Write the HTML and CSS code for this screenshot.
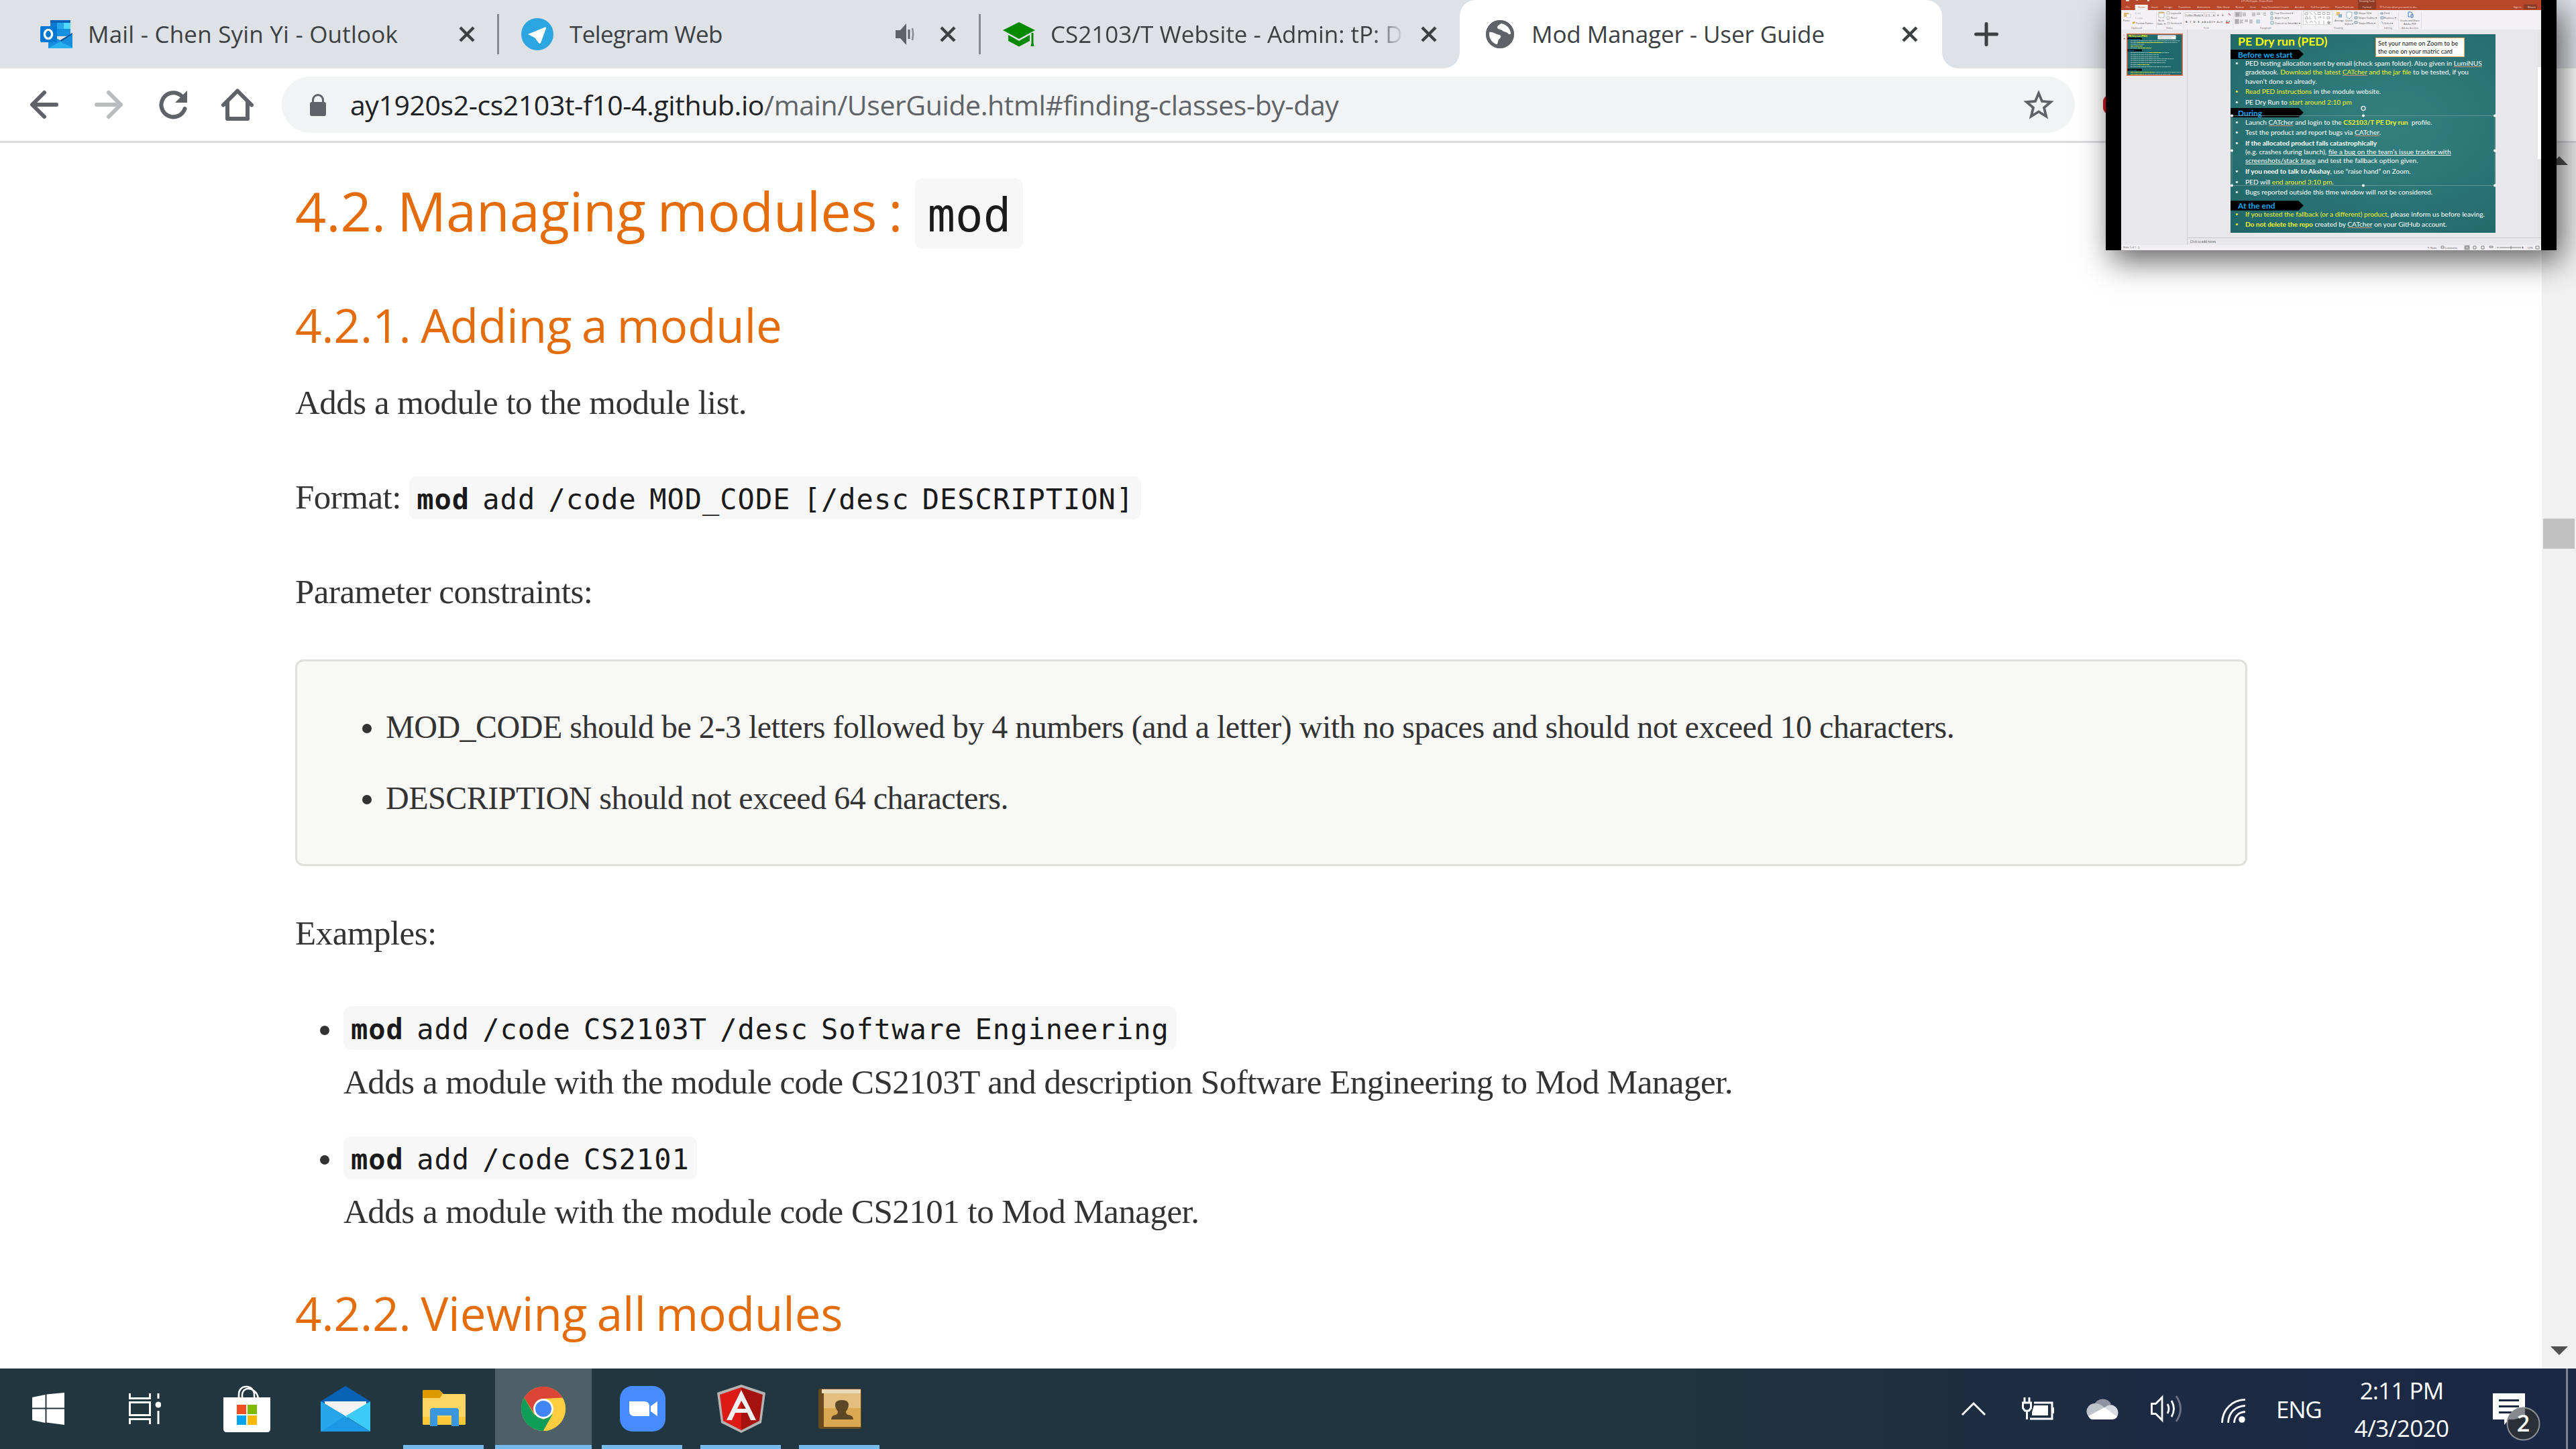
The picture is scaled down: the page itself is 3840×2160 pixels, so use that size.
FILE: index.html
```html
<!DOCTYPE html>
<html lang="en">
<head>
<meta charset="utf-8">
<title>Mod Manager - User Guide</title>
<link rel="stylesheet" href="styles.css">
</head>
<body>
<div class="screen">

<header class="tabstrip">
  <div class="tab tab-mail">
    <svg class="favicon" viewBox="0 0 48 48"><path d="M15 3h30v24H15z" fill="#0a63b8"/><path d="M15 7h30v20H15z" fill="#1490df"/><path d="M25 7h10v9H25z" fill="#28a8ea"/><path d="M35 7h10v9H35z" fill="#50d9ff"/><path d="M15 7h10v10H15z" fill="#0b78d4"/><path d="M12 45V24l18 9 18-10v22z" fill="#1490df"/><path d="M12 45l36-20v20z" fill="#28b0f0"/><path d="M28 34l20 10V23z" fill="#178fdd"/><path d="M30 33l18-11v2L31 35z" fill="#0a4f94"/><rect y="12" width="25" height="24" rx="2" fill="#0078d4"/><ellipse cx="12" cy="24" rx="5.6" ry="6.6" fill="none" stroke="#fff" stroke-width="3.4"/></svg>
    <span class="tab-title tt-mail">Mail - Chen Syin Yi - Outlook</span>
    <svg class="close" viewBox="0 0 24 24"><path d="M2 2l20 20M22 2L2 22"/></svg>
  </div>
  <div class="tab-sep"></div>
  <div class="tab tab-telegram">
    <svg class="favicon" viewBox="0 0 48 48"><circle cx="24" cy="24" r="24" fill="#2ca5e0"/><path d="M10 24L35.500 13.500Q37.500 13 37 15.500L29 37Q28 39 26 37L20.500 29.500z" fill="#fff"/></svg>
    <span class="tab-title tt-telegram">Telegram Web</span>
    <svg class="audio" viewBox="0 0 30 32"><path d="M0 10h7l9-10v32l-9-10H0z" fill="#5f6368"/><path d="M20 9v14" stroke="#5f6368" stroke-width="3"/><path d="M25 7q2 9 0 18" stroke="#8b8e92" stroke-width="2.600" fill="none"/></svg>
    <svg class="close" viewBox="0 0 24 24"><path d="M2 2l20 20M22 2L2 22"/></svg>
  </div>
  <div class="tab-sep"></div>
  <div class="tab tab-course">
    <svg class="favicon" viewBox="0 0 48 48"><g fill="#078a00"><path d="M24 6L48 18 24 31 0 18z"/><path d="M8 25l16 9 16-9v9l-16 8.500L8 34z"/><path d="M42.500 22h3v15l1 5h-5l1-5z"/></g></svg>
    <span class="tab-title tt-course">CS2103/T Website - Admin: tP: De</span>
    <svg class="close" viewBox="0 0 24 24"><path d="M2 2l20 20M22 2L2 22"/></svg>
  </div>
  <div class="tab tab-active">
    <svg class="favicon" viewBox="0 0 48 48"><circle cx="24" cy="24" r="21" fill="#5f6368"/><path d="M7 21c7-1 10 3 16 4 3 1 3 4 0 6-3 2-1 7-5 10C10 38 6 30 7 21zM27 6c-2 4-7 4-7 8 1 4 6 2 8 5 2 2 6 1 8 4 2 2 4 1 5 0-1-8-6-15-14-17z" fill="#fff"/><circle cx="24" cy="24" r="18.500" fill="none" stroke="#5f6368" stroke-width="5"/></svg>
    <span class="tab-title tt-active">Mod Manager - User Guide</span>
    <svg class="close" viewBox="0 0 24 24"><path d="M2 2l20 20M22 2L2 22"/></svg>
  </div>
  <svg class="new-tab" viewBox="0 0 36 36"><path d="M18 2.500v31M2.500 18h31"/></svg>
</header>

<nav class="toolbar">
  <svg class="nav" viewBox="0 0 42 42"><path d="M39 21H4M21 3L3 21l18 18"/></svg>
  <svg class="nav nav-off" viewBox="0 0 42 42"><path d="M3 21h35M21 3l18 18-18 18"/></svg>
  <svg class="nav" viewBox="0 0 42 42"><path d="M38.500 27A18 18 0 1 1 33 7.500"/><path d="M42 0v18H24z" class="solid"/></svg>
  <svg class="nav nav-home" viewBox="0 0 48 48"><path d="M3 24.500L24 3.500l21 21M9 21v24h30V21"/></svg>
  <div class="omnibox">
    <svg class="lock" viewBox="0 0 24 33"><rect y="12" width="24" height="21" rx="3" fill="#5f6368"/><path d="M4.500 13V9a7.500 7.500 0 0 1 15 0v4" fill="none" stroke="#5f6368" stroke-width="3"/></svg>
    <span class="url"><span class="host">ay1920s2-cs2103t-f10-4.github.io</span>/main/UserGuide.html#finding-classes-by-day</span>
    <svg class="star" viewBox="0 0 46 44"><path d="M23 5l5 12 13 1-10 8.500 3.200 13L23 32.500 11.800 39.500l3.200-13L5 18l13-1z" fill="none" stroke="#5f6368" stroke-width="3.800"/></svg>
  </div>
  <div class="extension"></div>
</nav>

<div class="viewport">
  <main class="guide">
    <h2>4.2. Managing modules : <code>mod</code></h2>
    <h3>4.2.1. Adding a module</h3>
    <p class="lead">Adds a module to the module list.</p>
    <p>Format: <code><b>mod</b> add /code MOD_CODE [/desc DESCRIPTION]</code></p>
    <p class="params">Parameter constraints:</p>
    <ul class="constraints">
      <li>MOD_CODE should be 2-3 letters followed by 4 numbers (and a letter) with no spaces and should not exceed 10 characters.</li>
      <li>DESCRIPTION should not exceed 64 characters.</li>
    </ul>
    <p>Examples:</p>
    <ul class="examples">
      <li><div><code><b>mod</b> add /code CS2103T /desc Software Engineering</code><br>Adds a module with the module code CS2103T and description Software Engineering to Mod Manager.</div></li>
      <li><div><code><b>mod</b> add /code CS2101</code><br>Adds a module with the module code CS2101 to Mod Manager.</div></li>
    </ul>
    <h3 class="last">4.2.2. Viewing all modules</h3>
  </main>
  <div class="scrollbar">
    <svg class="arrow" viewBox="0 0 26 13"><path d="M0 13L13 0l13 13z" fill="#505050"/></svg>
    <div class="thumb"></div>
    <svg class="arrow" viewBox="0 0 26 13"><path d="M0 0h26L13 13z" fill="#505050"/></svg>
  </div>
</div>

<footer class="taskbar">
  <div class="apps">
    <div class="app start"><svg width="48" height="48" viewBox="0 0 48 48"><path d="M0 7l19.500-4v19.500H0zM21.500 2.600L48 0v22.500H21.500zM0 24.500h19.500V45L0 41zM21.500 24.500H48V48l-26.500-3.500z" fill="#fff"/></svg></div>
    <div class="app start"><svg width="48" height="46" viewBox="0 0 48 46" fill="none" stroke="#fff" stroke-width="3"><path d="M1.500 0v7.500h30V0M1.500 46v-7.500h30V46M1.500 13.500h30v19h-30zM44 0v8M44 26v20"/><circle cx="44" cy="17" r="4.500" fill="#fff" stroke="none"/></svg></div>
    <div class="app"><svg width="70" height="70" viewBox="0 0 70 70"><path d="M23 20V14c0-7 4-12 11-12s12 5 12 12v6M28 20v-6c0-5 4-9 9-9s13 4 15 14" fill="none" stroke="#fff" stroke-width="2.600"/><path d="M0 18h70v47q0 5-5 5H5q-5 0-5-5z" fill="#fff"/><path d="M20 29h14v14H20z" fill="#f25022"/><path d="M36 29h14v14H36z" fill="#7fba00"/><path d="M20 45h14v14H20z" fill="#00a4ef"/><path d="M36 45h14v14H36z" fill="#ffb900"/></svg></div>
    <div class="app"><svg width="74" height="68" viewBox="0 0 74 68"><path d="M0 23L37 0l37 23v8H0z" fill="#0862b5"/><path d="M6 23h62v24H6z" fill="#f3f3f3"/><path d="M0 23l37 22v23H0z" fill="#28a8ea"/><path d="M74 23L37 45l37 23z" fill="#3ccbf7"/><path d="M0 68V23l74 45z" fill="#1c98e4"/><path d="M0 23l37 22L0 68z" fill="#27a5ea"/></svg></div>
    <div class="app running"><svg width="64" height="56" viewBox="0 0 64 56"><path d="M0 2q0-2 2-2h23l6 6h31q2 0 2 2v43H0z" fill="#ffd05c"/><path d="M0 2q0-2 2-2h23l5 5-4 7H0z" fill="#dc9a00"/><path d="M0 12h26l5-6h31q2 0 2 2v42q0 2-2 2H2q-2 0-2-2z" fill="#ffd664"/><path d="M0 40h64v10q0 2-2 2H2q-2 0-2-2z" fill="#fcc738"/><path d="M11 54V31q0-4 4-4h35q4 0 4 4v23H43V38H22v16z" fill="#3a96dd"/></svg></div>
    <div class="app running current"><svg width="68" height="68" viewBox="0 0 68 68"><circle cx="34" cy="34" r="33" fill="#ffcd40"/><path d="M5.400 17.500A33 33 0 0 1 62.600 17.500L34 19 21 42z" fill="#db4437"/><path d="M5.400 17.500A33 33 0 0 0 34 67L48 42 34 50 20 42z" fill="#0f9d58"/><path d="M34 19h29.500A33 33 0 0 1 34 67l14-25z" fill="#ffcd40"/><circle cx="34" cy="34" r="15" fill="#fff"/><circle cx="34" cy="34" r="12" fill="#4285f4"/></svg></div>
    <div class="app running"><svg width="68" height="68" viewBox="0 0 68 68"><rect width="68" height="68" rx="19" fill="#468cff"/><path d="M14 23h22q8 0 8 8v14H22q-8 0-8-8zM46 30l10-7v22l-10-7z" fill="#fff"/></svg></div>
    <div class="app running"><svg width="72" height="72" viewBox="0 0 72 72"><path d="M36 0l36 12-6 45-30 15L6 57 0 12z" fill="#b3b3b3"/><path d="M36 4L4 15l5 39 27 14z" fill="#dd1b16"/><path d="M36 4l32 11-5 39-27 14z" fill="#a6120d"/><path d="M36 8L14 53h8l5-11h18l5 11h8zm0 16l7 12H30z" fill="#f2f2f2"/></svg></div>
    <div class="app running"><svg width="64" height="60" viewBox="0 0 64 60"><rect width="64" height="60" rx="3" fill="#6b4a1f"/><rect x="5" y="1" width="58" height="6" fill="#ead9b5"/><rect x="8" y="7" width="55" height="50" fill="#d9a850"/><rect x="8" y="7" width="55" height="22" fill="#e3be7e"/><path d="M29 34q-4-5-4-10 0-7 10-7t10 7q0 5-4 10 0 4 3 5 8 1 8 7H19q0-6 7-7 3-1 3-5z" fill="#5d4726"/></svg></div>
  </div>
  <div class="tray">
    <svg class="chev" viewBox="0 0 38 22"><path d="M2 20L19 3l17 17" fill="none" stroke="#fff" stroke-width="3"/></svg>
    <svg class="batt" viewBox="0 0 48 34" fill="none" stroke="#fff"><path d="M18 8h27v24H12" stroke-width="3"/><path d="M4 0v8M11 0v8M7.500 19v14" stroke-width="3"/><path d="M1.500 8h12v8l-3 4h-6l-3-4z" stroke-width="3"/><path d="M18 12h21v15H15v-5z" fill="#fff" stroke="none"/><path d="M47 15v9" stroke-width="3"/></svg>
    <svg class="cloud" viewBox="0 0 48 32"><path d="M12 10a13 11 0 0 1 25-1l-10 8z" fill="#8d949f"/><path d="M6 30A12 12 0 0 1 14 8q8 0 14 8L6 30z" fill="#bfc3ca"/><path d="M26 15q12-10 20 1 4 9-3 15z" fill="#d8dbdf"/><path d="M3 27l24-13 19 14q-3 4-8 4H10q-5 0-7-5z" fill="#fff"/></svg>
    <svg class="speaker" viewBox="0 0 48 42" fill="none" stroke="#fff" stroke-width="2.800"><path d="M1.500 13.500h6L17 4v34L7.500 28.500h-6z"/><path d="M25 14q4 7 0 14M31 9q7 12 0 24"/><path d="M38 2q13 19 0 38" stroke="#6c7686"/></svg>
    <svg class="wifi" viewBox="0 0 36 36" fill="none" stroke="#fff" stroke-width="2.800"><path d="M1.400 36C2 16 16 2 36 1.400M10.500 36C11 21 21 11 36 10.500M19.500 36C20 26 26 20 36 19.500"/><circle cx="31" cy="31" r="4.800" fill="#fff" stroke="none"/></svg>
    <span class="lang">ENG</span>
    <div class="clock"><span class="time">2:11 PM</span><span class="date">4/3/2020</span></div>
    <svg class="notif" viewBox="0 0 72 74"><path d="M0 0h48v39H24l-7 8v-8H0z" fill="#fff"/><path d="M9 10.500h30M9 19.500h30M9 28.500h22" stroke="#1b2841" stroke-width="3"/><circle cx="45.500" cy="45.500" r="24" fill="#2b2f36" stroke="#8b8f96" stroke-width="2"/><path d="M22.500 39a24 24 0 0 1 25.500-17v13L31 39z" fill="#85888c"/><text x="45.500" y="57" class="badge">2</text></svg>
    <div class="peek"></div>
  </div>
</footer>

<aside class="share">
  <div class="ppt">
    <svg class="ribbon" viewBox="3162 0 626 44">
      <rect x="3162" width="626" height="15" fill="#b7472a"/>
      <rect x="3515" width="27" height="14" fill="#8f3a24"/>
      <rect x="3162" y="15" width="626" height="29" fill="#f3f1f3"/>
      <rect x="3182.700" y="7" width="19" height="9" fill="#f3f1f3"/>
      <g fill="#f2d8d0">
        <text x="3341" y="2.600" textLength="47">LTT-PE-D.pptx - PowerPoint</text><text x="3517" y="2.600" textLength="23">Drawing Tools</text>
        <path d="M3169 0h5v2h-5zM3183 1l3-1 2 1M3192 1l3 1M3201 0h3v2h-3z"/>
        <text x="3168.700" y="12" textLength="6">File</text><text x="3207" y="12" textLength="9.500">Insert</text><text x="3226" y="12" textLength="12">Design</text><text x="3247" y="12" textLength="19">Transitions</text><text x="3275" y="12" textLength="20">Animations</text><text x="3304.500" y="12" textLength="19">Slide Show</text><text x="3332.500" y="12" textLength="12">Review</text><text x="3354" y="12" textLength="8.500">View</text><text x="3371.500" y="12" textLength="41">Easy Document Creator</text><text x="3421" y="12" textLength="14">Acrobat</text><text x="3444.500" y="12" textLength="28">Poll Everywhere</text><text x="3481" y="12" textLength="28">PowerPointLabs</text><text x="3522" y="12" textLength="13">Format</text><text x="3551.500" y="12" textLength="53">Tell me what you want to do...</text><text x="3747" y="12" textLength="12">Sign in</text>
      </g>
      <circle cx="3549" cy="10" r="1.300" fill="none" stroke="#f2d8d0" stroke-width=".5"/>
      <rect x="3762" y="6.500" width="20" height="7.500" fill="#8f3a24"/><text x="3768" y="12" fill="#fff" textLength="12">Share</text>
      <text x="3187" y="12" fill="#b7472a" textLength="11">Home</text>
      <g stroke="#d6d3d6" stroke-width=".6"><path d="M3214.500 17v26M3255 17v26M3329 17v26M3430.500 17v26M3545 17v26M3575.500 17v26M3609.500 17v26"/></g>
      <g fill="#555">
        <text x="3165" y="32" textLength="10">Paste</text><text x="3183" y="21" textLength="8" fill="#999">Cut</text><text x="3183" y="28" textLength="11" fill="#999">Copy</text><text x="3184" y="36" textLength="26">Format Painter</text>
        <text x="3217" y="32" textLength="9">New</text><text x="3215.500" y="37" textLength="12">Slide ▾</text><text x="3236" y="21" textLength="15">Layout ▾</text><text x="3236" y="28" textLength="9.500">Reset</text><text x="3236" y="36" textLength="16">Section ▾</text>
        <text x="3258" y="23.500" textLength="26">Calibri (Body) ▾</text><text x="3288" y="23.500" textLength="13">20 ▾</text><text x="3305" y="23.500" textLength="4">A</text><text x="3312" y="23.500" textLength="4">A</text>
        <text x="3258" y="33.500" textLength="34" font-weight="700">B  I  U  S abc</text><text x="3293" y="33.500" textLength="20">AV▾ Aa▾</text><text x="3318" y="33">A ▾</text>
        <text x="3390" y="21" textLength="28">Text Direction ▾</text><text x="3391" y="28" textLength="21">Align Text ▾</text><text x="3391" y="36" textLength="38">Convert to SmartArt ▾</text>
        <text x="3480" y="32" textLength="14">Arrange</text><text x="3496" y="32" textLength="11">Quick</text><text x="3495" y="37" textLength="13">Styles ▾</text>
        <text x="3516" y="21" textLength="19">Shape Fill ▾</text><text x="3516" y="28" textLength="27">Shape Outline ▾</text><text x="3516" y="36" textLength="25">Shape Effects ▾</text>
        <text x="3554" y="21" textLength="8">Find</text><text x="3554" y="28" textLength="18">Replace ▾</text><text x="3554" y="36" textLength="13">Select ▾</text>
        <text x="3578" y="32" textLength="29">Create and Share</text><text x="3583" y="37" textLength="19">Adobe PDF</text>
      </g>
      <g fill="#777"><text x="3177" y="43" textLength="16">Clipboard</text><text x="3229" y="43" textLength="10">Slides</text><text x="3285" y="43" textLength="8">Font</text><text x="3369" y="43" textLength="17">Paragraph</text><text x="3479" y="43" textLength="14">Drawing</text><text x="3554" y="43" textLength="12">Editing</text><text x="3580" y="43" textLength="25">Adobe Acrobat</text></g>
      <path d="M3166 19h7v6h-7z" fill="#e0b565"/><path d="M3170 21h6v5h-6z" fill="#fff" stroke="#999" stroke-width=".4"/><path d="M3179 33l3-1 1 2-4 2z" fill="#e0a040"/>
      <path d="M3218 18h8v8h-8zM3230 17.500h4v3.500h-4zM3230 25h4v3.500h-4zM3231 33h3v3h-3z" fill="#fff" stroke="#999" stroke-width=".6"/><path d="M3218 18h8v2h-8z" fill="#d8b080"/>
      <path d="M3257 18.500h29v6h-29zM3287 18.500h15v6h-15z" fill="none" stroke="#bbb" stroke-width=".5"/>
      <path d="M3318 34h5" stroke="#e02020" stroke-width="1.300"/><path d="M3322 20l3 3" stroke="#d06080" stroke-width="1.400"/>
      <path d="M3331 17.500h11v8h-11zM3331 28h7v8h-7z" fill="#c8c6c8"/><path d="M3333 19.500h5M3333 21.500h5M3333 23.500h5M3343 19.500h5M3343 21.500h5M3343 23.500h5M3357 19.500h5M3357 21.500h5M3357 23.500h5M3364 19.500h5M3364 21.500h5M3332 30h5M3332 32h4M3332 34h5M3339 30h5M3339 32h4M3339 34h5M3346 30h5M3346 32h5M3353 30h5M3353 32h5M3353 34h5M3374 19.500h4M3374 22.500h4" stroke="#777" stroke-width=".7"/>
      <path d="M3363 30h6M3363 32h6M3363 34h6M3385 18h3v4h-3zM3385 25h3v4h-3zM3385 32h4v4h-4z" stroke="#5b9bb5" stroke-width=".8" fill="none"/>
      <rect x="3433.500" y="16.500" width="43" height="20" fill="#fff" stroke="#bbb" stroke-width=".5"/><path d="M3436 19h4v3h-4zM3443 18l4 4M3449 18l4 4M3455 18.500h4v3h-4zM3462 18.500h4v3h-4zM3469 18.500h4v3h-4zM3436 28l2.500-4 2.500 4zM3443 24v4h3M3449 24h2v4h2M3455 26h5l-2-2M3464 24v4M3469 25h4v3h-4zM3437 31l3 4M3443 34q2-5 5 0M3450 31l3 4M3457 31v5M3464 31v5M3469 33h5l-4 3 1.500-5 1.500 5z" fill="none" stroke="#777" stroke-width=".6"/>
      <path d="M3483 18h5v5h-5z" fill="#efc070"/><path d="M3486 21h5v5h-5z" fill="#8ab0cc"/><path d="M3498 18h8v6l-4 4-4-2z" fill="#fff" stroke="#6a9ab8" stroke-width=".7"/>
      <path d="M3510 18h4v3h-4zM3510 25h4v3h-4zM3510 32h4v3h-4zM3549 19h3v2h-3zM3549 25h4v3h-4zM3550 32l3 3" fill="none" stroke="#4f7fa0" stroke-width=".8"/><path d="M3590 18h4l2 2v2M3590 18v7h3M3594 22h3v4h-3z" fill="none" stroke="#2f74d0" stroke-width="1"/>
    </svg>
    <div class="workspace">
      <div class="slides-pane">
        <div class="slide-no"><span>1</span><span>★</span></div>
        <svg class="mini" viewBox="0 0 84 63"><rect width="84" height="63" fill="#1f6a6c"/><rect x="46.500" y="2.500" width="27" height="6" fill="#fff"/><path d="M48 4.500h23M48 6.500h19" stroke="#aaa" stroke-width=".6"/><text x="3" y="5" fill="#ff0" font-size="4" font-weight="700" textLength="28">PE Dry run (PED)</text><path d="M1 6h22v3H1zM1 23.500h22v3H1zM1 52.500h22v3H1z" fill="#000"/><g fill="#00a8f0" font-size="2.600" font-weight="700"><text x="3" y="8.500">Before we start</text><text x="3" y="26">During</text><text x="3" y="55">At the end</text></g><g stroke="#9cc4c2" stroke-width=".9" stroke-dasharray="3 .6 5 .5 2 .6"><path d="M6 10.800h74M6 13.400h70M6 16h21M6 21.600h10M6 28.500h57M6 31.700h42M6 34.800h42M6 37.600h64M6 40.300h53M6 43.500h52M6 46.500h12M6 49.500h60M40 57.700h41M27 61h38"/></g><g stroke="#d9e030" stroke-width="1" stroke-dasharray="4 .5 2 .4"><path d="M16 13.400h38M6 18.800h18M17 21.600h20M34 28.500h18M17 46.500h17M6 57.700h35M6 61h20"/></g><rect x=".7" y=".7" width="82.600" height="61.600" fill="none" stroke="#ee6c4d" stroke-width="1.400"/></svg>
      </div>
      <div class="stage">
        <section class="slide">
          <h1>PE Dry run (PED)</h1>
          <h4>Before we start</h4>
          <ul>
            <li>PED testing allocation sent by email (check spam folder). Also given in <u class="sp">LumiNUS</u><br>gradebook. <em>Download the latest <u class="sp">CATcher</u> and the jar file</em> to be tested, if you<br>haven’t done so already.</li>
            <li class="y"><em>Read PED instructions</em> in the module website.</li>
            <li>PE Dry Run to <em>start around 2:10 pm</em></li>
          </ul>
          <h4 class="h-during">During</h4>
          <ul>
            <li>Launch <u class="sp">CATcher</u> and login to the <em><b>CS2103/T PE Dry run</b></em>&nbsp; profile.</li>
            <li>Test the product and report bugs via <u class="sp">CATcher</u>.</li>
            <li><b>If the allocated product fails catastrophically</b><br>(e.g. crashes during launch), <u>file a bug on the team’s issue tracker with</u><br><u>screenshots/stack trace</u> and test the fallback option given.</li>
            <li><b>If you need to talk to Akshay</b>, use “raise hand” on Zoom.</li>
            <li>PED will <em>end around 3:10 pm</em>.</li>
            <li>Bugs reported outside this time window will not be considered.</li>
          </ul>
          <h4 class="h-end">At the end</h4>
          <ul class="end">
            <li class="y"><em>If you tested the fallback (or a different) product</em>, please inform us before leaving.</li>
            <li class="y"><em><b>Do not delete the repo</b></em> created by <u class="sp">CATcher</u> on your GitHub account.</li>
          </ul>
          <div class="note">Set your name on Zoom to be<br>the one on your matric card</div>
          <svg class="selection" viewBox="0 0 400 125"><path d="M4 16.500h392v104H4zM200 8v8" fill="none" stroke="#7d9c9c" stroke-width=".7"/><circle cx="200" cy="5.500" r="3" fill="none" stroke="#ddd" stroke-width="1.600"/><g fill="#fff"><circle cx="4" cy="16.500" r="2"/><circle cx="200" cy="16.500" r="2"/><circle cx="396" cy="16.500" r="2"/><circle cx="4" cy="68.500" r="2"/><circle cx="396" cy="68.500" r="2"/><circle cx="4" cy="120.500" r="2"/><circle cx="200" cy="120.500" r="2"/><circle cx="396" cy="120.500" r="2"/></g></svg>
        </section>
        <div class="ppt-scroll"><i></i></div>
        <div class="notes">Click to add notes</div>
      </div>
    </div>
    <div class="status"><span>Slide 1 of 1 &nbsp; ▯</span><svg viewBox="0 0 170 8"><rect x="55" width="9" height="8" fill="#c9c7c9"/><g fill="#555"><text x="5" y="5.500" textLength="9">Notes</text><text x="26" y="5.500" textLength="19">Comments</text><text x="149" y="5.500" textLength="9">127%</text></g><g fill="none" stroke="#666" stroke-width=".8"><path d="M1 3l2 2M21 2h4v3h-4zM57 2h5v4h-5zM69 2h4v4h-4zM81 2h4v4h-4zM93 2h5v2h-5zM104 4h3M108 4h32M125 1.500v5M141 4h3M142.500 2.500v3M162 2h5v4h-5z"/></g></svg></div>
  </div>
</aside>

</div>
</body>
</html>
```
FILE: styles.css
```css
* { box-sizing: border-box; }
html, body { margin: 0; }
svg { display: block; flex: none; }
ul { list-style: none; margin: 0; padding: 0; }

.screen {
  position: relative;
  width: 3840px;
  height: 2160px;
  overflow: hidden;
  background: #fff;
  display: flex;
  flex-direction: column;
}

/* tab strip */
.tabstrip {
  flex: none;
  height: 102px;
  background: #dee1e6;
  display: flex;
  align-items: center;
  font: 35px "Open Sans", sans-serif;
  color: #3c4043;
}
.tab { height: 102px; display: flex; align-items: center; }
.favicon { width: 48px; height: 48px; margin-right: 23px; }
.tab-title { flex: 1; white-space: nowrap; line-height: 48px; }
.close { width: 24px; height: 24px; fill: none; stroke: #3c4043; stroke-width: 4.5; }
.tab-mail { width: 741px; padding: 0 33px 0 60px; }
.tab-telegram { width: 715px; padding: 0 34px 0 33px; }
.tab-telegram .favicon { margin-right: 24px; }
.tab-course { width: 714px; padding: 0 33px; }
.tab-active {
  position: relative;
  width: 719px;
  padding: 0 36px 0 36px;
  background: #fff;
  border-radius: 24px 24px 0 0;
}
.tab-active::before,
.tab-active::after {
  content: "";
  position: absolute;
  bottom: 0;
  width: 24px;
  height: 24px;
}
.tab-active::before { left: -24px; background: radial-gradient(circle at 0 0, transparent 23.5px, #fff 24px); }
.tab-active::after { right: -24px; background: radial-gradient(circle at 100% 0, transparent 23.5px, #fff 24px); }
.tab-sep { width: 3px; height: 60px; background: #85888d; }
.tt-mail { letter-spacing: .2px; }
.tt-telegram { letter-spacing: -.6px; }
.tt-course {
  flex: none;
  width: 528px;
  margin-right: 24px;
  -webkit-mask-image: linear-gradient(90deg, #000 480px, transparent 528px);
  mask-image: linear-gradient(90deg, #000 480px, transparent 528px);
}
.tt-active { letter-spacing: -.1px; }
.audio { width: 30px; height: 32px; margin-right: 36px; }
.new-tab { width: 36px; height: 36px; margin-left: 48px; fill: none; stroke: #3c4043; stroke-width: 5; stroke-linecap: round; }

/* toolbar */
.toolbar {
  flex: none;
  height: 111px;
  border-bottom: 3px solid #dadce0;
  background: #fff;
  display: flex;
  align-items: center;
  padding-left: 45px;
}
.nav { width: 42px; height: 42px; margin-right: 54px; fill: none; stroke: #5f6368; stroke-width: 6; stroke-linecap: round; stroke-linejoin: round; overflow: visible; }
.nav .solid { fill: #5f6368; stroke: none; }
.nav-off { stroke: #babbbf; }
.nav-home { width: 48px; height: 48px; margin: 0 42px 0 -3px; }
.omnibox {
  width: 2673px;
  height: 84px;
  border-radius: 42px;
  background: #f1f3f4;
  display: flex;
  align-items: center;
  padding: 0 31px 0 42px;
}
.lock { width: 24px; height: 33px; margin-right: 36px; }
.url { flex: 1; font: 41px/60px "Open Sans", sans-serif; letter-spacing: -.42px; color: #5f6368; }
.host { color: #202124; }
.star { width: 46px; height: 44px; }
.extension { width: 40px; height: 28px; margin-left: 42px; border-radius: 9px; background: #d0141a; }

/* page */
.viewport { flex: none; height: 1827px; display: flex; }
.guide {
  flex: 1;
  padding: 52px 0 0 440px;
  overflow: hidden;
  color: #333;
  font-family: "Liberation Serif", serif;
}
.guide h2,
.guide h3 {
  margin: 0;
  font-family: "Open Sans", sans-serif;
  font-weight: 400;
  color: #e46c0a;
  word-spacing: -.05em;
}
.guide h2 { font-size: 81px; line-height: 97px; }
.guide h3 { font-size: 69px; line-height: 83px; margin-top: 80.7px; }
.guide h3.last { margin-top: 69px; }
.guide p { margin: 59.500px 0 0; font-size: 51px; line-height: 82px; letter-spacing: -.01em; }
.guide p.lead { margin-top: 33px; }
.guide p.params { margin-top: 59px; }
code {
  font: 42px/1 "DejaVu Sans Mono", monospace;
  letter-spacing: 1px;
  word-spacing: -7px;
  color: #1a1a1a;
  background: #f7f7f8;
  border-radius: 11px;
  padding: 9.500px 11px 6px;
}
h2 code { font-size: 69px; letter-spacing: 0; padding: 15px 18px 10px 19px; margin-left: 1px; }
.guide li { display: flex; }
.guide li::before { content: ""; flex: none; width: 14px; height: 14px; border-radius: 50%; background: #333; margin-right: 21px; }
.constraints {
  width: 2910px;
  height: 308px;
  margin-top: 59.500px;
  padding: 59px 0 0 97px;
  border: 3px solid #e0e0dc;
  border-radius: 12px;
  background: #f8f8f7;
  font-size: 48px;
  line-height: 77px;
  letter-spacing: -.01em;
}
.constraints li { margin-bottom: 29.500px; }
.constraints li::before { margin-top: 34px; }
.examples { margin-top: 59.500px; padding-left: 37px; font-size: 51px; line-height: 81px; letter-spacing: -.01em; }
.examples li { margin-bottom: 31.500px; }
.examples li:last-child { margin-bottom: 0; }
.examples li::before { margin-top: 37px; }
.scrollbar {
  width: 51px;
  background: #f1f1f1;
  display: flex;
  flex-direction: column;
  align-items: center;
  padding: 20px 0;
}
.arrow { width: 26px; height: 13px; }
.thumb { width: 47px; height: 45px; margin: 527px 0 auto; background: #c1c1c1; }

/* taskbar */
.taskbar {
  flex: none;
  height: 120px;
  display: flex;
  justify-content: space-between;
  background: linear-gradient(90deg, #223740, #20353f 60%, #1d2d42 78%, #1a2745);
}
.apps { display: flex; }
.app { width: 147px; height: 120px; display: flex; align-items: center; justify-content: center; position: relative; }
.app.start { width: 144px; }
.start + .app:not(.start) { margin-left: 6px; }
.running::after { content: ""; position: absolute; left: 13px; right: 14px; bottom: 0; height: 6px; background: #76b9ed; }
.app.current { width: 144px; margin: 0 2px 0 3px; background: #4e6067; }
.current::after { left: 0; right: 0; }
.tray { display: flex; align-items: center; width: 917px; color: #fff; font: 35px "Open Sans", sans-serif; }
.chev { width: 38px; height: 22px; }
.batt { width: 48px; height: 34px; margin-left: 53px; }
.cloud { width: 48px; height: 32px; margin-left: 48px; }
.speaker { width: 48px; height: 42px; margin-left: 48px; }
.wifi { width: 36px; height: 36px; margin: 6px 0 0 57px; }
.lang { margin-left: 46px; width: 114px; letter-spacing: -1.300px; }
.clock { width: 144px; margin-left: 1px; padding-top: 2px; display: flex; flex-direction: column; align-items: center; line-height: 56px; white-space: nowrap; }
.time { letter-spacing: -.900px; }
.date { letter-spacing: -.600px; }
.notif { width: 72px; height: 74px; margin: 28px 0 0 64px; }
.badge { font: 600 34px "Open Sans", sans-serif; fill: #fff; text-anchor: middle; }
.peek { width: 3px; height: 120px; background: #7d8595; margin-left: 37px; }

/* shared-screen window floating over the browser */
.share {
  position: absolute;
  left: 3139px;
  top: 0;
  width: 672px;
  height: 373px;
  padding: 0 23px;
  background: #000;
  box-shadow: 8px 16px 44px rgba(0, 0, 0, .62);
}
.ppt { height: 373px; background: #e8e7ea; display: flex; flex-direction: column; font-family: "Open Sans", sans-serif; }
.ribbon { width: 626px; height: 44px; font-size: 4px; }
.workspace { height: 321px; display: flex; }
.slides-pane { width: 99px; border-right: 1px solid #cfcdd0; display: flex; padding: 6px 0 0 3px; }
.slide-no { width: 5px; font-size: 4px; line-height: 5px; color: #c0503a; display: flex; flex-direction: column; }
.mini { width: 84px; height: 63px; font-family: Lato, sans-serif; }
.stage { flex: 1; display: grid; grid-template-columns: 1fr 5px; grid-template-rows: 310px 1fr; }
.slide {
  position: relative;
  width: 395px;
  height: 296px;
  margin: 7px 0 0 64px;
  background: radial-gradient(ellipse at 60% 45%, #33807f, #2b7475 50%, #1f6567);
  font: 10.150px/13.300px Lato, Carlito, sans-serif;
  color: #fff;
  white-space: nowrap;
}
.slide h1 { margin: 0; height: 22.500px; padding-left: 11px; font-size: 17.700px; line-height: 22px; color: #ff0; }
.slide h4 {
  margin: 0;
  width: 109px;
  height: 14.500px;
  padding-left: 11px;
  background: #000;
  clip-path: polygon(0 0, 93% 0, 100% 50%, 93% 100%, 0 100%);
  color: #11a8f0;
  font-size: 11.900px;
  line-height: 15px;
}
.slide li { position: relative; padding-left: 22px; margin-bottom: 2.350px; }
.slide li::before { content: "•"; position: absolute; left: 7px; font-size: 8px; }
.slide li.y::before, .slide em { color: #f3f32a; font-style: normal; }
.slide li b { letter-spacing: -.06px; }
.slide .h-during { margin: -1px 0 .600px; }
.slide .h-end { margin: 5.500px 0 -1px; }
.slide u { text-decoration-thickness: .6px; text-underline-offset: 1px; }
.slide .sp { text-decoration-color: #d08a7a; }
.note { position: absolute; left: 216px; top: 4.500px; width: 133px; height: 29px; border: 1.500px solid #e9a868; background: #fff; color: #111; padding: 2px 0 0 3px; font-size: 9.200px; line-height: 12px; }
.selection { position: absolute; left: -2px; top: 105px; width: 400px; height: 125px; }
.ppt-scroll { padding-top: 56px; background: #e4e3e6; }
.ppt-scroll i { display: block; height: 137px; background: #fff; }
.notes { grid-column: 1 / 3; border-top: 1px solid #c9c7ca; padding-left: 4px; font-size: 4.600px; line-height: 10px; color: #555; }
.status { flex: 1; display: flex; justify-content: space-between; background: #f1eff1; font-size: 3.800px; line-height: 8px; color: #555; padding-left: 3px; }
.status svg { width: 170px; height: 8px; font-size: 3.800px; }
```
